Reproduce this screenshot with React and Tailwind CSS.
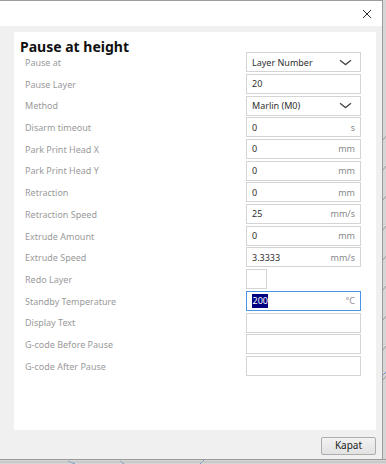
import React from "react";

const rows = [
  { label: "Pause at", type: "select", value: "Layer Number" },
  { label: "Pause Layer", value: "20" },
  { label: "Method", type: "select", value: "Marlin (M0)" },
  { label: "Disarm timeout", value: "0", unit: "s" },
  { label: "Park Print Head X", value: "0", unit: "mm" },
  { label: "Park Print Head Y", value: "0", unit: "mm" },
  { label: "Retraction", value: "0", unit: "mm" },
  { label: "Retraction Speed", value: "25", unit: "mm/s" },
  { label: "Extrude Amount", value: "0", unit: "mm" },
  { label: "Extrude Speed", value: "3.3333", unit: "mm/s" },
  { label: "Redo Layer", type: "check" },
  { label: "Standby Temperature", value: "200", unit: "°C", focus: true },
  { label: "Display Text", value: "" },
  { label: "G-code Before Pause", value: "" },
  { label: "G-code After Pause", value: "" },
];

function Chevron() {
  return (
    <svg width="13" height="7" viewBox="0 0 13 7" className="shrink-0">
      <path d="M1 1.2 L6.5 5.6 L12 1.2" fill="none" stroke="#4a4a4a" strokeWidth="1.3" />
    </svg>
  );
}

function Field({ r }) {
  if (r.type === "check") {
    return <div className="w-[21px] h-[20px] border border-[#d4d4d4] bg-white" />;
  }
  const border = r.focus ? "border-[#4b93e6]" : "border-[#d4d4d4]";
  return (
    <div className={`w-[115px] h-[20px] border ${border} bg-white flex items-center justify-between pl-[5px] ${r.type === "select" ? "pr-[8px]" : "pr-[5px]"}`}>
      {r.focus ? (
        <span className="bg-[#000080] text-white leading-[14px] px-[0.5px]">{r.value}</span>
      ) : (
        <span className="text-[#303030]">{r.value}</span>
      )}
      {r.type === "select" ? <Chevron /> : r.unit ? <span className="text-[#8a8a8a]">{r.unit}</span> : null}
    </div>
  );
}

export default function App() {
  return (
    <div className="relative w-[386px] h-[464px] bg-[#d6d6d6] overflow-hidden font-['Noto_Sans',sans-serif]">
      <svg className="absolute inset-0" width="386" height="464">
        <g stroke="#8f8f8f" strokeWidth="0.8" fill="none">
          <path d="M383 140 L386 136 M383 170 L386 166 M383 200 L386 196 M383 230 L386 226 M383 260 L386 256 M383 290 L386 286 M383 320 L386 316 M383 350 L386 346 M383 380 L386 376" />
        </g>
        <g stroke="#5b82c9" strokeWidth="0.8" fill="none">
          <path d="M68 461 L75 464 M120 461 L124 464 M200 464 L205 459 M383 375 L386 372" />
        </g>
        <path d="M0 459.5 L386 459.5" stroke="#9a9a9a" strokeWidth="1" />
        <path d="M0 462 L386 462" stroke="#bdbdbd" strokeWidth="1" />
      </svg>
      <div className="relative w-[383px] h-[459px] bg-[#f0f0f0] border-t border-r border-[#9c9c9c] flex flex-col">
        <div className="h-[25px] bg-white flex items-center justify-end pr-[10px]">
          <svg width="10" height="10" viewBox="0 0 10 10">
            <path d="M1 1 L9 9 M9 1 L1 9" stroke="#2b2b2b" strokeWidth="1" />
          </svg>
        </div>
        <div className="ml-[14px] mt-[6px] w-[362px] h-[398px] bg-white flex flex-col">
          <div className="ml-[6px] mt-[4.6px] h-[15.7px] text-[14px] leading-[20px] font-bold text-[#111]">
            Pause at height
          </div>
          <div className="flex flex-col text-[9px]">
            {rows.map((r) => (
              <div key={r.label} className="h-[21.7px] flex items-start">
                <div className="w-[232px] h-[20px] pl-[11px] pt-[1px] flex items-center text-[#9a9a9a]">{r.label}</div>
                <Field r={r} />
              </div>
            ))}
          </div>
        </div>
        <div className="flex justify-end pr-[6px] mt-[6.5px]">
          <div className="w-[55px] h-[18px] rounded-[2px] border border-[#adadad] bg-gradient-to-b from-[#f2f2f2] to-[#e2e2e2] flex items-center justify-center text-[10px] text-[#222]">
            Kapat
          </div>
        </div>
      </div>
    </div>
  );
}
